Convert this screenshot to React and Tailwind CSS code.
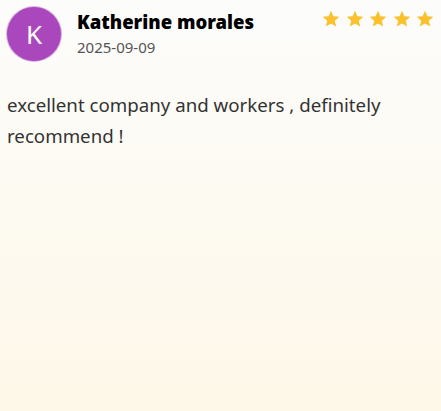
const font = { fontFamily: '"Noto Sans", "Open Sans", sans-serif' };

function Star() {
  return (
    <svg viewBox="0 0 24 24" className="h-5 w-5 fill-[#fbc02d]">
      <path d="M12 17.27 18.18 21l-1.64-7.03L22 9.24l-7.19-.61L12 2 9.19 8.63 2 9.24l5.46 4.73L5.82 21z" />
    </svg>
  );
}

export default function App() {
  return (
    <div
      className="h-[411px] w-[441px] bg-gradient-to-b from-[#fcfcfb] to-[#fef8e8]"
      style={font}
    >
      <div className="flex items-start justify-between pl-[7px] pr-[6px] pt-[7px]">
        <div className="flex items-start gap-4">
          <div className="flex h-[54px] w-[54px] items-center justify-center rounded-full bg-[#ab47bc] text-[26px] text-white ring-1 ring-[#d9b3e0]">
            K
          </div>
          <div className="pt-[2px]">
            <div className="text-[18.5px] font-black leading-[26px] text-black">Katherine morales</div>
            <div className="mt-[2px] text-[15px] leading-5 text-[#555]">2025-09-09</div>
          </div>
        </div>
        <div className="flex gap-[3.5px] pt-[2px]">
          <Star />
          <Star />
          <Star />
          <Star />
          <Star />
        </div>
      </div>
      <p className="mt-[28px] px-[7px] text-[18.7px] leading-[31px] text-[#333]">
        excellent company and workers , definitely recommend !
      </p>
    </div>
  );
}
